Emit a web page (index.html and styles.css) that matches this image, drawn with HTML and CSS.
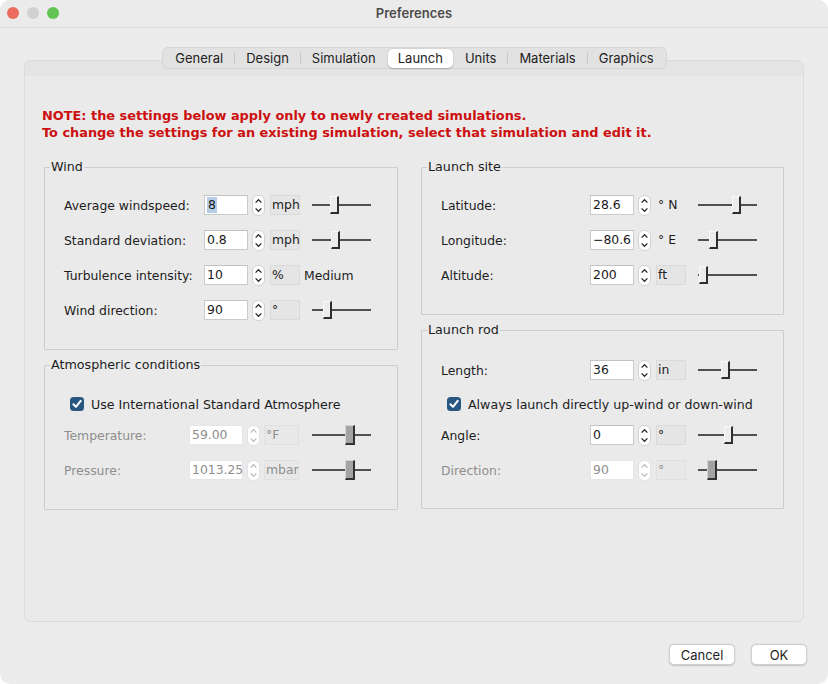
FILE: index.html
```html
<!DOCTYPE html>
<html lang="en">
<head>
<meta charset="utf-8">
<title>Preferences</title>
<link rel="stylesheet" href="styles.css">
</head>
<body>
<div class="window">
  <header class="titlebar">
    <div class="lights"><span class="light red"></span><span class="light grey"></span><span class="light green"></span></div>
    <div class="title">Preferences</div>
    <div></div>
  </header>

  <nav class="tabs-wrap">
    <div class="tabs">
      <span class="tab">General</span><span class="sep"></span>
      <span class="tab">Design</span><span class="sep"></span>
      <span class="tab">Simulation</span><span class="nosep"></span>
      <span class="tab active">Launch</span><span class="nosep"></span>
      <span class="tab">Units</span><span class="sep"></span>
      <span class="tab">Materials</span><span class="sep"></span>
      <span class="tab">Graphics</span>
    </div>
  </nav>

  <main class="pane">
    <p class="note">NOTE: the settings below apply only to newly created simulations.<br>To change the settings for an existing simulation, select that simulation and edit it.</p>

    <div class="columns">
      <div class="col">
        <fieldset class="group">
          <legend>Wind</legend>
          <div class="gbody wind">
            <div class="row">
              <span class="lbl">Average windspeed:</span>
              <span class="field"><span class="sel">8</span></span>
              <svg class="spin" width="13" height="21" viewBox="0 0 13 21"><rect x="0.5" y="0.5" width="12" height="20" rx="5.5" fill="#fff" stroke="#d2d2d2"/><path d="M3.6 7.6 L6.5 4.7 L9.4 7.6" fill="none" stroke="#2b2b2b" stroke-width="1.3"/><path d="M3.6 13.4 L6.5 16.3 L9.4 13.4" fill="none" stroke="#2b2b2b" stroke-width="1.3"/></svg>
              <span class="unit box">mph</span>
              <span class="slider"><span class="thumb" style="left:20px"></span></span>
            </div>
            <div class="row">
              <span class="lbl">Standard deviation:</span>
              <span class="field">0.8</span>
              <svg class="spin" width="13" height="21" viewBox="0 0 13 21"><rect x="0.5" y="0.5" width="12" height="20" rx="5.5" fill="#fff" stroke="#d2d2d2"/><path d="M3.6 7.6 L6.5 4.7 L9.4 7.6" fill="none" stroke="#2b2b2b" stroke-width="1.3"/><path d="M3.6 13.4 L6.5 16.3 L9.4 13.4" fill="none" stroke="#2b2b2b" stroke-width="1.3"/></svg>
              <span class="unit box">mph</span>
              <span class="slider"><span class="thumb" style="left:21px"></span></span>
            </div>
            <div class="row">
              <span class="lbl">Turbulence intensity:</span>
              <span class="field">10</span>
              <svg class="spin" width="13" height="21" viewBox="0 0 13 21"><rect x="0.5" y="0.5" width="12" height="20" rx="5.5" fill="#fff" stroke="#d2d2d2"/><path d="M3.6 7.6 L6.5 4.7 L9.4 7.6" fill="none" stroke="#2b2b2b" stroke-width="1.3"/><path d="M3.6 13.4 L6.5 16.3 L9.4 13.4" fill="none" stroke="#2b2b2b" stroke-width="1.3"/></svg>
              <span class="unit box">%</span>
              <span class="extra">Medium</span>
            </div>
            <div class="row">
              <span class="lbl">Wind direction:</span>
              <span class="field">90</span>
              <svg class="spin" width="13" height="21" viewBox="0 0 13 21"><rect x="0.5" y="0.5" width="12" height="20" rx="5.5" fill="#fff" stroke="#d2d2d2"/><path d="M3.6 7.6 L6.5 4.7 L9.4 7.6" fill="none" stroke="#2b2b2b" stroke-width="1.3"/><path d="M3.6 13.4 L6.5 16.3 L9.4 13.4" fill="none" stroke="#2b2b2b" stroke-width="1.3"/></svg>
              <span class="unit box">°</span>
              <span class="slider"><span class="thumb" style="left:13px"></span></span>
            </div>
          </div>
        </fieldset>

        <fieldset class="group">
          <legend>Atmospheric conditions</legend>
          <div class="gbody atmos">
            <label class="check">
              <svg class="cbox" width="14" height="14" viewBox="0 0 14 14"><rect width="14" height="14" rx="3.5" fill="#275781"/><path d="M3.4 7.3 L6 9.9 L10.7 3.9" fill="none" stroke="#fff" stroke-width="2" stroke-linecap="round" stroke-linejoin="round"/></svg>
              <span>Use International Standard Atmosphere</span>
            </label>
            <div class="row disabled first-after-check">
              <span class="lbl">Temperature:</span>
              <span class="field">59.00</span>
              <svg class="spin" width="13" height="21" viewBox="0 0 13 21"><rect x="0.5" y="0.5" width="12" height="20" rx="5.5" fill="#fff" stroke="#e2e2e2"/><path d="M3.6 7.6 L6.5 4.7 L9.4 7.6" fill="none" stroke="#b8b8b8" stroke-width="1.2"/><path d="M3.6 13.4 L6.5 16.3 L9.4 13.4" fill="none" stroke="#b8b8b8" stroke-width="1.2"/></svg>
              <span class="unit box">°F</span>
              <span class="slider"><span class="thumb dis" style="left:35px"></span></span>
            </div>
            <div class="row disabled">
              <span class="lbl">Pressure:</span>
              <span class="field">1013.25</span>
              <svg class="spin" width="13" height="21" viewBox="0 0 13 21"><rect x="0.5" y="0.5" width="12" height="20" rx="5.5" fill="#fff" stroke="#e2e2e2"/><path d="M3.6 7.6 L6.5 4.7 L9.4 7.6" fill="none" stroke="#b8b8b8" stroke-width="1.2"/><path d="M3.6 13.4 L6.5 16.3 L9.4 13.4" fill="none" stroke="#b8b8b8" stroke-width="1.2"/></svg>
              <span class="unit box">mbar</span>
              <span class="slider"><span class="thumb dis" style="left:35px"></span></span>
            </div>
          </div>
        </fieldset>
      </div>

      <div class="col">
        <fieldset class="group">
          <legend>Launch site</legend>
          <div class="gbody site">
            <div class="row">
              <span class="lbl">Latitude:</span>
              <span class="field">28.6</span>
              <svg class="spin" width="13" height="21" viewBox="0 0 13 21"><rect x="0.5" y="0.5" width="12" height="20" rx="5.5" fill="#fff" stroke="#d2d2d2"/><path d="M3.6 7.6 L6.5 4.7 L9.4 7.6" fill="none" stroke="#2b2b2b" stroke-width="1.3"/><path d="M3.6 13.4 L6.5 16.3 L9.4 13.4" fill="none" stroke="#2b2b2b" stroke-width="1.3"/></svg>
              <span class="unit">° N</span>
              <span class="slider"><span class="thumb" style="left:36px"></span></span>
            </div>
            <div class="row">
              <span class="lbl">Longitude:</span>
              <span class="field">−80.6</span>
              <svg class="spin" width="13" height="21" viewBox="0 0 13 21"><rect x="0.5" y="0.5" width="12" height="20" rx="5.5" fill="#fff" stroke="#d2d2d2"/><path d="M3.6 7.6 L6.5 4.7 L9.4 7.6" fill="none" stroke="#2b2b2b" stroke-width="1.3"/><path d="M3.6 13.4 L6.5 16.3 L9.4 13.4" fill="none" stroke="#2b2b2b" stroke-width="1.3"/></svg>
              <span class="unit">° E</span>
              <span class="slider"><span class="thumb" style="left:13px"></span></span>
            </div>
            <div class="row">
              <span class="lbl">Altitude:</span>
              <span class="field">200</span>
              <svg class="spin" width="13" height="21" viewBox="0 0 13 21"><rect x="0.5" y="0.5" width="12" height="20" rx="5.5" fill="#fff" stroke="#d2d2d2"/><path d="M3.6 7.6 L6.5 4.7 L9.4 7.6" fill="none" stroke="#2b2b2b" stroke-width="1.3"/><path d="M3.6 13.4 L6.5 16.3 L9.4 13.4" fill="none" stroke="#2b2b2b" stroke-width="1.3"/></svg>
              <span class="unit box">ft</span>
              <span class="slider"><span class="thumb" style="left:3px"></span></span>
            </div>
          </div>
        </fieldset>

        <fieldset class="group">
          <legend>Launch rod</legend>
          <div class="gbody rod">
            <div class="row">
              <span class="lbl">Length:</span>
              <span class="field">36</span>
              <svg class="spin" width="13" height="21" viewBox="0 0 13 21"><rect x="0.5" y="0.5" width="12" height="20" rx="5.5" fill="#fff" stroke="#d2d2d2"/><path d="M3.6 7.6 L6.5 4.7 L9.4 7.6" fill="none" stroke="#2b2b2b" stroke-width="1.3"/><path d="M3.6 13.4 L6.5 16.3 L9.4 13.4" fill="none" stroke="#2b2b2b" stroke-width="1.3"/></svg>
              <span class="unit box">in</span>
              <span class="slider"><span class="thumb" style="left:25px"></span></span>
            </div>
            <label class="check">
              <svg class="cbox" width="14" height="14" viewBox="0 0 14 14"><rect width="14" height="14" rx="3.5" fill="#275781"/><path d="M3.4 7.3 L6 9.9 L10.7 3.9" fill="none" stroke="#fff" stroke-width="2" stroke-linecap="round" stroke-linejoin="round"/></svg>
              <span>Always launch directly up-wind or down-wind</span>
            </label>
            <div class="row first-after-check">
              <span class="lbl">Angle:</span>
              <span class="field">0</span>
              <svg class="spin" width="13" height="21" viewBox="0 0 13 21"><rect x="0.5" y="0.5" width="12" height="20" rx="5.5" fill="#fff" stroke="#d2d2d2"/><path d="M3.6 7.6 L6.5 4.7 L9.4 7.6" fill="none" stroke="#2b2b2b" stroke-width="1.3"/><path d="M3.6 13.4 L6.5 16.3 L9.4 13.4" fill="none" stroke="#2b2b2b" stroke-width="1.3"/></svg>
              <span class="unit box">°</span>
              <span class="slider"><span class="thumb" style="left:28px"></span></span>
            </div>
            <div class="row disabled">
              <span class="lbl">Direction:</span>
              <span class="field">90</span>
              <svg class="spin" width="13" height="21" viewBox="0 0 13 21"><rect x="0.5" y="0.5" width="12" height="20" rx="5.5" fill="#fff" stroke="#e2e2e2"/><path d="M3.6 7.6 L6.5 4.7 L9.4 7.6" fill="none" stroke="#b8b8b8" stroke-width="1.2"/><path d="M3.6 13.4 L6.5 16.3 L9.4 13.4" fill="none" stroke="#b8b8b8" stroke-width="1.2"/></svg>
              <span class="unit box">°</span>
              <span class="slider"><span class="thumb dis" style="left:11px"></span></span>
            </div>
          </div>
        </fieldset>
      </div>
    </div>
  </main>

  <footer class="buttons">
    <button class="btn cancel">Cancel</button>
    <button class="btn ok">OK</button>
  </footer>
</div>
</body>
</html>
```

FILE: styles.css
```css
* { box-sizing: border-box; }

html, body {
  margin: 0;
  padding: 0;
  background: #ffffff;
}

body {
  width: 828px;
  height: 684px;
  overflow: hidden;
  font-family: "DejaVu Sans", "Liberation Sans", sans-serif;
  font-size: 12.4px;
  color: #1d1d1d;
}

.window {
  width: 828px;
  height: 684px;
  background: #ececec;
  border-radius: 10px;
  overflow: hidden;
}

/* Title bar */
.titlebar {
  height: 28px;
  border-bottom: 1px solid #d9d9d9;
  background: #ebebeb;
  display: grid;
  grid-template-columns: 1fr auto 1fr;
  align-items: center;
}

.lights {
  display: flex;
  gap: 8px;
  padding-left: 7px;
  padding-bottom: 1px;
}

.light {
  width: 12px;
  height: 12px;
  border-radius: 50%;
  display: block;
}
.light.red { background: #ec6a5e; }
.light.grey { background: #d1d1d1; }
.light.green { background: #61c454; }

.title {
  font-family: "Inter", "Liberation Sans", sans-serif;
  font-size: 13px;
  font-weight: 600;
  color: #4b4b4b;
  padding-bottom: 1px;
}

/* Tabs */
.tabs-wrap {
  display: flex;
  justify-content: center;
  margin-top: 19px;
  position: relative;
  z-index: 1;
  padding-left: 1px;
}

.tabs {
  display: flex;
  align-items: center;
  height: 22px;
  background: #e2e2e2;
  border: 1px solid #d6d6d6;
  border-radius: 6px;
  padding: 0 1px;
  font-family: "Inter", "Liberation Sans", sans-serif;
  font-size: 13px;
  color: #222;
}

.tab {
  padding: 0 11px;
  height: 19px;
  line-height: 19px;
  border-radius: 5px;
}

.tab.active {
  background: #ffffff;
  box-shadow: 0 0.5px 1.5px rgba(0, 0, 0, 0.25);
  padding: 0 10px;
}

.sep {
  width: 1px;
  height: 12px;
  background: #c9c9c9;
}
.nosep { width: 1px; }

/* Pane */
.pane {
  margin: -9px 24px 0 24px;
  height: 562px;
  border: 1px solid #dcdcdc;
  border-radius: 6px;
  background: linear-gradient(#e4e4e4 0, #e4e4e4 15px, #eaeaea 15px);
  padding: 46px 0 0 17px;
}

.note {
  margin: 0;
  color: #cc1010;
  font-weight: bold;
  font-size: 12.9px;
  line-height: 17px;
}

.columns {
  display: grid;
  grid-template-columns: 354px 363px;
  column-gap: 23px;
  margin-top: 18px;
  margin-left: 2px;
}

.col {
  display: flex;
  flex-direction: column;
  gap: 7px;
}

.group {
  margin: 0;
  padding: 0;
  border: 1px solid #cdcdcd;
  border-radius: 1px;
  min-width: 0;
}

.group legend {
  margin-left: 5px;
  padding: 0 1px;
  line-height: 16px;
  font-size: 12.7px;
  color: #1d1d1d;
}

.gbody {
  padding: 20px 0 29px 19px;
  display: flex;
  flex-direction: column;
  gap: 15px;
}
.gbody.rod { padding-top: 22px; padding-bottom: 28px; }

.row {
  display: flex;
  align-items: center;
  height: 20px;
}

.lbl {
  display: block;
  white-space: nowrap;
}
.wind .lbl { width: 140px; }
.atmos .lbl { width: 125px; }
.site .lbl, .rod .lbl { width: 149px; }

.field {
  display: block;
  width: 44px;
  height: 20px;
  line-height: 18px;
  background: #ffffff;
  border: 1px solid #cbcbcb;
  border-top-color: #c2c2c2;
  padding-left: 2px;
  white-space: nowrap;
  color: #1a1a1a;
}
.atmos .field { width: 54px; }

.sel {
  background: #b5cde6;
  display: inline-block;
  line-height: 16px;
  padding: 0 1px;
}

.spin {
  display: block;
  margin-left: 4px;
  flex: none;
}

.unit {
  display: block;
  width: 30px;
  height: 20px;
  line-height: 18px;
  margin-left: 5px;
  padding-left: 1px;
  border: 1px solid transparent;
  white-space: nowrap;
}
.unit.box {
  background: #e5e5e5;
  border-color: #dadada;
}
.atmos .unit { width: 35px; margin-left: 4px; }

.extra {
  margin-left: 4px;
}

.slider {
  display: block;
  position: relative;
  width: 61px;
  height: 20px;
  margin-left: 10px;
  flex: none;
}
.atmos .slider { margin-left: 11px; }

.slider::before {
  content: "";
  position: absolute;
  left: 2px;
  right: 0;
  top: 9px;
  height: 2px;
  background: #505050;
}

.thumb {
  position: absolute;
  top: 1px;
  width: 9px;
  height: 18px;
  background: #ececec;
  border-right: 2px solid #2e2e2e;
  border-bottom: 2px solid #2e2e2e;
  border-top: 1px solid #f8f8f8;
  border-left: 1px solid #f8f8f8;
}

.thumb.dis {
  top: 0;
  width: 10px;
  height: 20px;
  background: #a3a3a3;
  border-right: 2px solid #333;
  border-bottom: 2px solid #333;
  border-top: 1px solid #d4d4d4;
  border-left: 1px solid #d4d4d4;
}

.disabled .lbl,
.disabled .field,
.disabled .unit {
  color: #8e8e8e;
}
.disabled .field {
  border-color: #e6e6e6;
}
.disabled .unit.box {
  background: #e8e8e8;
  border-color: #e0e0e0;
}

.check {
  display: flex;
  align-items: center;
  gap: 7px;
  height: 20px;
  padding-left: 6px;
  font-size: 12.6px;
}
.cbox { display: block; flex: none; }

.atmos .check { margin-top: 1px; }
.rod .check { margin-top: -1px; }

.check + .first-after-check { margin-top: -4px; }

/* Buttons */
.buttons {
  display: flex;
  justify-content: flex-end;
  gap: 16px;
  padding-right: 21px;
  margin-top: 22px;
}

.btn {
  font-family: "Inter", "Liberation Sans", sans-serif;
  font-size: 13px;
  color: #1f1f1f;
  height: 21px;
  background: #ffffff;
  border: 0.5px solid #cfcfcf;
  border-radius: 5px;
  box-shadow: 0 0.5px 1.5px rgba(0, 0, 0, 0.18);
  padding: 0;
}
.btn.cancel { width: 66px; }
.btn.ok { width: 56px; }
```
